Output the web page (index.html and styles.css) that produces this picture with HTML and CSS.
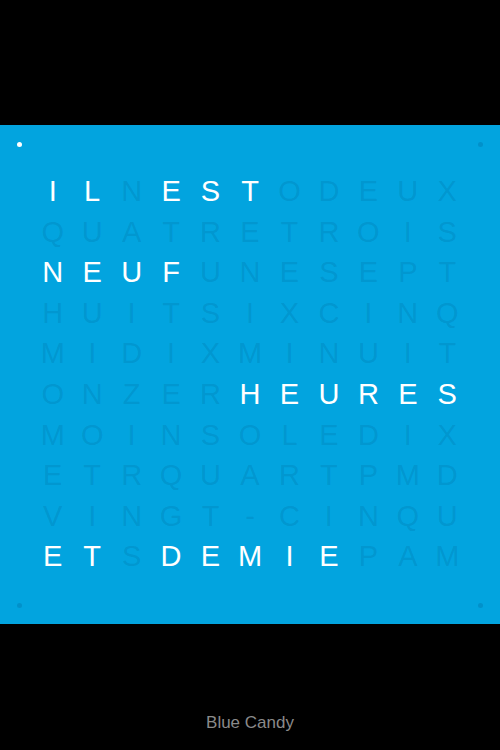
FILE: index.html
```html
<!DOCTYPE html>
<html lang="fr">
<head>
<meta charset="utf-8">
<title>Blue Candy</title>
<link rel="stylesheet" href="styles.css">
</head>
<body>
<div class="screen">
  <div class="top"></div>
  <div class="clock">
    <span class="dot dot-tl on"></span>
    <span class="dot dot-tr"></span>
    <span class="dot dot-bl"></span>
    <span class="dot dot-br"></span>
    <div class="grid">
      <span class="on">I</span><span class="on">L</span><span>N</span><span class="on">E</span><span class="on">S</span><span class="on">T</span><span>O</span><span>D</span><span>E</span><span>U</span><span>X</span>
      <span>Q</span><span>U</span><span>A</span><span>T</span><span>R</span><span>E</span><span>T</span><span>R</span><span>O</span><span>I</span><span>S</span>
      <span class="on">N</span><span class="on">E</span><span class="on">U</span><span class="on">F</span><span>U</span><span>N</span><span>E</span><span>S</span><span>E</span><span>P</span><span>T</span>
      <span>H</span><span>U</span><span>I</span><span>T</span><span>S</span><span>I</span><span>X</span><span>C</span><span>I</span><span>N</span><span>Q</span>
      <span>M</span><span>I</span><span>D</span><span>I</span><span>X</span><span>M</span><span>I</span><span>N</span><span>U</span><span>I</span><span>T</span>
      <span>O</span><span>N</span><span>Z</span><span>E</span><span>R</span><span class="on">H</span><span class="on">E</span><span class="on">U</span><span class="on">R</span><span class="on">E</span><span class="on">S</span>
      <span>M</span><span>O</span><span>I</span><span>N</span><span>S</span><span>O</span><span>L</span><span>E</span><span>D</span><span>I</span><span>X</span>
      <span>E</span><span>T</span><span>R</span><span>Q</span><span>U</span><span>A</span><span>R</span><span>T</span><span>P</span><span>M</span><span>D</span>
      <span>V</span><span>I</span><span>N</span><span>G</span><span>T</span><span>-</span><span>C</span><span>I</span><span>N</span><span>Q</span><span>U</span>
      <span class="on">E</span><span class="on">T</span><span>S</span><span class="on">D</span><span class="on">E</span><span class="on">M</span><span class="on">I</span><span class="on">E</span><span>P</span><span>A</span><span>M</span>
    </div>
  </div>
  <div class="footer">Blue Candy</div>
</div>
</body>
</html>
```

FILE: styles.css
```css
html, body {
  margin: 0;
  padding: 0;
  background: #000;
}
.screen {
  width: 500px;
  height: 750px;
  display: flex;
  flex-direction: column;
  background: #000;
}
.top {
  height: 125px;
  flex: none;
}
.clock {
  position: relative;
  flex: none;
  width: 500px;
  height: 499px;
  background: #02a4df;
  box-sizing: border-box;
  padding: 45px 33px 0 33px;
}
.grid {
  display: grid;
  grid-template-columns: repeat(11, 1fr);
  grid-auto-rows: 40.6px;
  font-family: "Liberation Sans", Arial, sans-serif;
  font-size: 29px;
  line-height: 40.6px;
  text-align: center;
  color: rgba(0, 60, 110, 0.14);
}
.grid span {
  display: block;
  padding-top: 1px;
}
.grid .on {
  color: #fff;
}
.dot {
  position: absolute;
  width: 5px;
  height: 5px;
  border-radius: 50%;
  background: rgba(0, 60, 110, 0.18);
}
.dot.on {
  background: #fff;
}
.dot-tl { left: 17px; top: 17px; }
.dot-tr { right: 17px; top: 17px; }
.dot-bl { left: 17px; bottom: 16px; }
.dot-br { right: 17px; bottom: 16px; }
.footer {
  flex: 1;
  box-sizing: border-box;
  padding-top: 89px;
  text-align: center;
  line-height: 20px;
  font-family: "Liberation Sans", Arial, sans-serif;
  font-size: 17px;
  color: #8a8a8a;
}
```
